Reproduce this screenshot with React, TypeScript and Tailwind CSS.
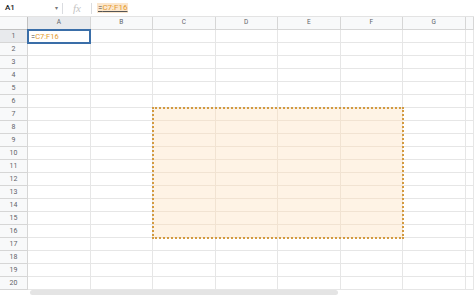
import React from "react";

const cols = ["A", "B", "C", "D", "E", "F", "G", ""];
const rows = Array.from({ length: 20 }, (_, i) => i + 1);

// range C7:F16 -> cols 2..5, rows 7..16
const inRange = (c: number, r: number) => c >= 2 && c <= 5 && r >= 7 && r <= 16;

export default function App() {
  return (
    <div className="w-[474px] h-[295px] overflow-hidden bg-white font-['Roboto',sans-serif] text-[#202124]">
      {/* formula bar */}
      <div className="flex items-center h-[17px] border-b border-[#e3e3e3]">
        <div className="w-[62px] flex items-center justify-between pl-[5px] pr-[4px]">
          <span className="text-[8px] font-medium leading-none">A1</span>
          <span className="text-[6px] text-[#777] leading-none">▾</span>
        </div>
        <div className="w-px h-[11px] bg-[#dadce0]" />
        <div className="w-[28px] flex justify-center">
          <span className="font-['Liberation_Serif',serif] italic text-[11px] text-[#c4c4c4] leading-none">fx</span>
        </div>
        <div className="w-px h-[11px] bg-[#dadce0]" />
        <div className="ml-[5px] px-[1px] bg-[#fbe6cc] text-[8px] leading-[10px] underline decoration-[#555]">
          <span className="text-[#444]">=</span>
          <span className="text-[#e59a2c]">C7:F16</span>
        </div>
      </div>

      {/* grid */}
      <div className="relative">
        <div className="grid grid-cols-[28px_repeat(7,62.5px)_1fr] auto-rows-[13px]">
          <div className="bg-[#f8f9fa] border-r border-b border-[#c0c0c0]" />
          {cols.map((c, i) => (
            <div
              key={"h" + i}
              className={`flex items-center justify-center text-[6.5px] text-[#5f6368] border-r border-b border-[#d6d6d6] ${
                i === 0 ? "bg-[#e8eaed]" : "bg-[#f8f9fa]"
              }`}
            >
              {c}
            </div>
          ))}
          {rows.map((r) => (
            <React.Fragment key={r}>
              <div
                className={`flex items-center justify-center text-[7px] text-[#5f6368] border-r border-b border-[#d6d6d6] ${
                  r === 1 ? "bg-[#e8eaed]" : "bg-[#f8f9fa]"
                }`}
              >
                {r}
              </div>
              {cols.map((_, c) => (
                <div
                  key={c}
                  className={`border-r border-b ${
                    inRange(c, r) ? "bg-[#fef3e5] border-[#f1e3d2]" : "bg-white border-[#e6e6e6]"
                  }`}
                />
              ))}
            </React.Fragment>
          ))}
        </div>

        {/* active cell A1 */}
        <div className="absolute left-[27px] top-[12px] w-[64px] h-[15px] border-2 border-[#3a6ea8] bg-white flex items-center pl-[2px]">
          <span className="text-[7.5px] leading-none">
            <span className="text-[#444]">=</span>
            <span className="text-[#e59a2c]">C7:F16</span>
          </span>
        </div>

        {/* copied/selected range C7:F16 */}
        <div className="absolute left-[152px] top-[90px] w-[252px] h-[132px] border-2 border-dotted border-[#d39a40]" />
      </div>

      {/* horizontal scrollbar */}
      <div className="flex h-[5px] bg-white">
        <div className="w-[30px]" />
        <div className="w-[308px] bg-[#e4e4e4] rounded-sm" />
      </div>
    </div>
  );
}
